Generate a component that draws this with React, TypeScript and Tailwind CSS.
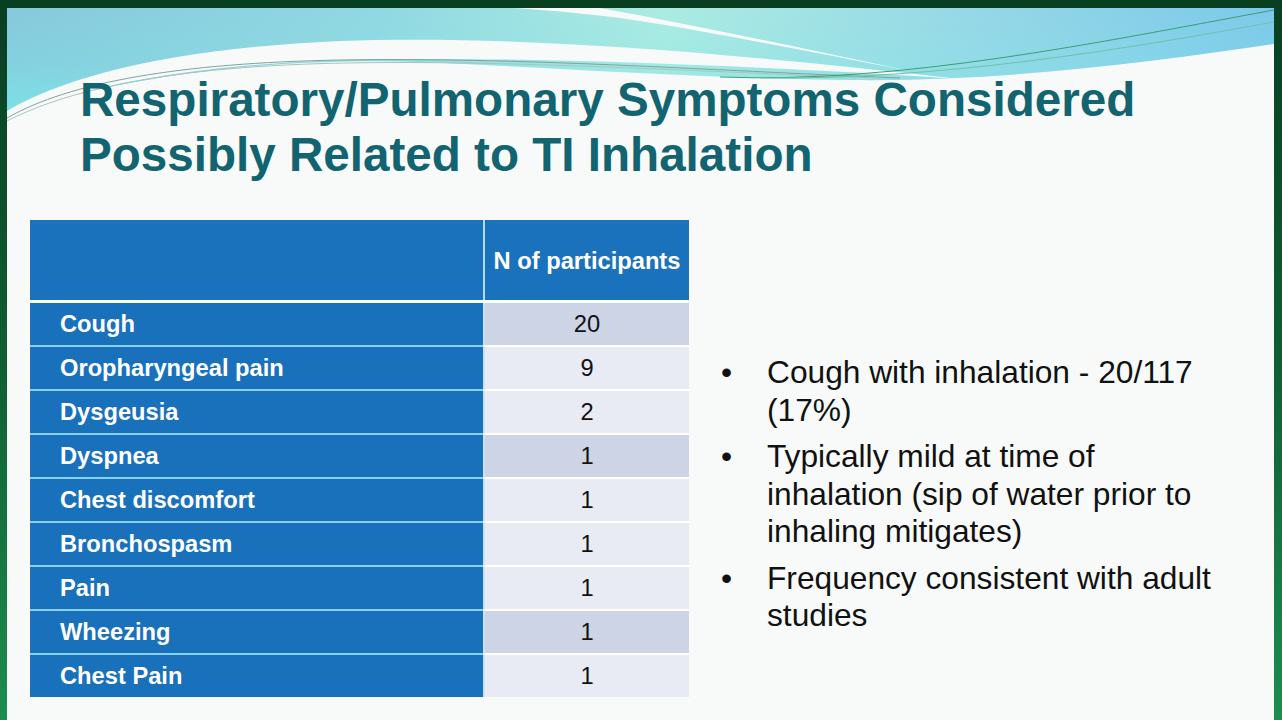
import React from 'react';

type Row = { label: string; count: string; shade: boolean };

const rows: Row[] = [
  { label: 'Cough', count: '20', shade: true },
  { label: 'Oropharyngeal pain', count: '9', shade: false },
  { label: 'Dysgeusia', count: '2', shade: false },
  { label: 'Dyspnea', count: '1', shade: true },
  { label: 'Chest discomfort', count: '1', shade: false },
  { label: 'Bronchospasm', count: '1', shade: false },
  { label: 'Pain', count: '1', shade: false },
  { label: 'Wheezing', count: '1', shade: true },
  { label: 'Chest Pain', count: '1', shade: false },
];

const bullets = [
  'Cough with inhalation - 20/117 (17%)',
  'Typically mild at time of inhalation (sip of water prior to inhaling mitigates)',
  'Frequency consistent with adult studies',
];

function Waves() {
  return (
    <svg
      className="absolute left-0 top-0 pointer-events-none"
      width="1267"
      height="130"
      viewBox="7 8 1267 130"
    >
      <defs>
        <linearGradient id="cyanH" x1="0" y1="0" x2="1" y2="0">
          <stop offset="0" stopColor="#86c9dc" />
          <stop offset="0.3" stopColor="#92d8e2" />
          <stop offset="0.52" stopColor="#acebe2" />
          <stop offset="0.75" stopColor="#98d8e6" />
          <stop offset="1" stopColor="#7dc8ea" />
        </linearGradient>
        <linearGradient id="cyanV" x1="0" y1="0" x2="0" y2="1">
          <stop offset="0" stopColor="#7ee8e8" stopOpacity="0" />
          <stop offset="0.55" stopColor="#7ee8e8" stopOpacity="0.25" />
          <stop offset="1" stopColor="#76e6ea" stopOpacity="0.85" />
        </linearGradient>
      </defs>
      <path
        d="M7,8 H1274 V44 C1150,62 1000,82 850,80 C700,78 560,68 420,62 C300,58 150,68 7,114 Z"
        fill="url(#cyanH)"
      />
      <path
        d="M7,8 H1274 V44 C1150,62 1000,82 850,80 C700,78 560,68 420,62 C300,58 150,68 7,114 Z"
        fill="url(#cyanV)"
      />
      <path
        d="M7,111 C70,74 180,48 340,41 C520,35 720,52 960,79 C760,66 560,58 400,59 C230,60 100,78 7,120 Z"
        fill="#f8fafa"
      />
      <path
        d="M515,8 L600,8 C700,26 800,48 910,71 C800,50 700,30 640,21 C600,15 560,11 515,8 Z"
        fill="#f8fafa"
      />
      <path
        d="M7,118 C70,82 180,63 340,60 C520,57 700,70 900,78"
        fill="none"
        stroke="#7fa49a"
        strokeWidth="1"
      />
      <path
        d="M7,121 C75,86 185,66 345,63 C520,60 700,72 880,78"
        fill="none"
        stroke="#a9c4bd"
        strokeWidth="1"
      />
      <path
        d="M720,77 C900,84 1100,42 1274,10"
        fill="none"
        stroke="#3a9f72"
        strokeWidth="1"
      />
      <path
        d="M760,78 C940,80 1120,50 1274,22"
        fill="none"
        stroke="#6fc3a4"
        strokeWidth="1"
      />
    </svg>
  );
}

export default function App() {
  return (
    <div className="w-[1282px] h-[720px] overflow-hidden bg-linear-to-b from-[#093f21] via-[#0f5e33] to-[#1c8e4e] pt-[8px] pl-[7px] pr-[8px] font-['Liberation_Sans',Arial,sans-serif]">
      <div className="relative h-full bg-[#f8fafa]">
        <Waves />

        <h1 className="relative pt-[64px] pl-[73px] text-[47.6px] leading-[55px] font-bold text-[#116470]">
          Respiratory/Pulmonary Symptoms Considered
          <br />
          Possibly Related to TI Inhalation
        </h1>

        <div className="relative mt-[38px] flex items-start">
          {/* table */}
          <div className="ml-[23px] flex flex-col w-[659px]">
            <div className="flex h-[80px]">
              <div className="w-[453px] bg-[#1b72bc]" />
              <div className="w-[2px] bg-[#b4dcf0]" />
              <div className="w-[204px] pt-[3px] bg-[#1b72bc] flex items-center justify-center text-white font-bold text-[23.7px]">
                N of participants
              </div>
            </div>
            <div className="h-[3px] bg-white" />
            {rows.map((r, i) => (
              <div key={r.label} className="flex">
                <div
                  className={
                    i === 0
                      ? 'w-[453px] h-[42px] pt-[2px] bg-[#1a71bb] pl-[30px] flex items-center text-white font-bold text-[23.7px]'
                      : 'w-[453px] h-[44px] pt-[2px] border-t-2 border-[#86d2f0] bg-[#1a71bb] pl-[30px] flex items-center text-white font-bold text-[23.7px]'
                  }
                >
                  {r.label}
                </div>
                <div
                  className={
                    i === 0 ? 'w-[2px] h-[42px] bg-[#c9e3f3]' : 'w-[2px] h-[44px] border-t-2 border-white bg-[#c9e3f3]'
                  }
                />
                <div
                  className={
                    (i === 0 ? 'h-[42px] ' : 'h-[44px] border-t-2 border-white ') +
                    (r.shade ? 'bg-[#cdd4e6] ' : 'bg-[#e8ebf4] ') +
                    'w-[204px] pt-[2px] flex items-center justify-center text-[23.7px] text-[#111]'
                  }
                >
                  {r.count}
                </div>
              </div>
            ))}
          </div>

          {/* notes */}
          <ul className="ml-[32px] mt-[134px] w-[510px] text-[31.7px] leading-[37.5px] text-[#111]">
            {bullets.map((b, i) => (
              <li key={i} className={i === 0 ? 'flex' : 'flex mt-[9px]'}>
                <span className="w-[46px] shrink-0">•</span>
                <span className="w-[462px]">{b}</span>
              </li>
            ))}
          </ul>
        </div>
      </div>
    </div>
  );
}
